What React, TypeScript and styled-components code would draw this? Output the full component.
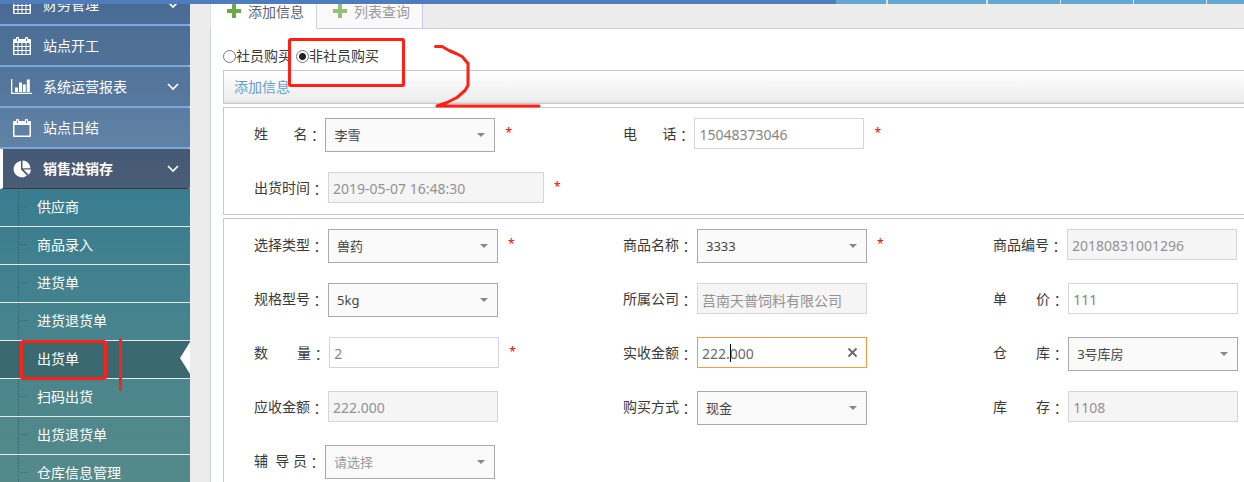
import React, { useId } from "react";
import styled, { createGlobalStyle, css } from "styled-components";

const GlobalStyle = createGlobalStyle`
  * { box-sizing: border-box; }
  body {
    margin: 0;
    background: #ececec;
    color: #393939;
    font: 14px/20px "Noto Sans", "Noto Sans CJK SC", sans-serif;
  }
  input, select, button { font-family: inherit; margin: 0; }
  a { text-decoration: none; color: inherit; }
`;

const Page = styled.div`
  position: relative;
  display: flex;
  flex-direction: column;
  height: 100vh;
  overflow: hidden;
`;

const TopBar = styled.header`
  display: flex;
  flex: none;
  justify-content: flex-end;
  height: 4px;
  background: #4f7dbb;
`;

const TopSlot = styled.div<{ $width: number; $gap: number }>`
  box-sizing: content-box;
  width: ${(p) => p.$width}px;
  background: #62a8d1;
  border-right: ${(p) => p.$gap}px solid #e1e1e1;
`;

const Body = styled.div`
  display: flex;
  flex: 1;
  min-height: 0;
  overflow: hidden;
`;

/* ---- sidebar ---- */

const Sidebar = styled.nav`
  flex: none;
  width: 190px;
  margin-top: -19px;
`;

const MenuLink = styled.a<{ $from: string; $to: string; $active?: boolean }>`
  display: grid;
  grid-template-columns: 20px 1fr 12px;
  align-items: center;
  column-gap: 11px;
  height: 41px;
  padding: 1px 11px 0 12px;
  color: #fff;
  background: linear-gradient(${(p) => p.$from}, ${(p) => p.$to}) padding-box;
  border-bottom: 2px solid #7ba7df;
  border-radius: 0 0 2px 0;
  ${(p) =>
    p.$active &&
    css`
      height: 40px;
      padding-left: 9px;
      font-weight: 700;
      border-left: 3px solid #fff;
      border-bottom: 1px solid #3b3b3b;
    `}
`;

const MenuIcon = styled.svg`
  display: block;
  overflow: visible;
`;

const SubMenu = styled.ul`
  margin: 0;
  padding: 0;
  list-style: none;
  background: linear-gradient(#3a7d90, #47848d 50%, #568a89);
`;

const SubItem = styled.li<{ $active?: boolean }>`
  position: relative;
  border-bottom: 1px solid #e4e9ea;
  background: ${(p) => (p.$active ? "#3a6a70" : "transparent")};

  &::before {
    content: "";
    position: absolute;
    top: 0;
    bottom: 0;
    left: 18px;
    border-left: 1px dotted #33626b;
  }
  &::after {
    content: "";
    position: absolute;
    top: 17px;
    left: 20px;
    width: 7px;
    border-top: 1px dotted #33626b;
  }
`;

const SubLink = styled.a`
  display: block;
  padding: 0 0 2px 37px;
  line-height: 35px;
  color: #fff;
`;

const ActiveArrow = styled.span`
  position: absolute;
  top: 1px;
  right: 0;
  border: solid transparent;
  border-width: 16px 10px 16px 0;
  border-right-color: #fff;
`;

/* ---- main area ---- */

const Main = styled.main`
  display: flex;
  flex: 1;
  flex-direction: column;
  min-width: 0;
  margin-left: 20px;
`;

const Tabs = styled.div`
  display: flex;
  flex: none;
  height: 25px;
  overflow: hidden;

  &::after {
    content: "";
    flex: 1;
    border-bottom: 1px solid #c5d0dc;
  }
`;

const Tab = styled.button<{ $active?: boolean }>`
  display: flex;
  align-items: center;
  gap: 7px;
  height: 35px;
  margin-top: -10px;
  padding: 2px 12px 0 16px;
  font-size: 14px;
  line-height: 20px;
  color: ${(p) => (p.$active ? "#576373" : "#999")};
  background: ${(p) => (p.$active ? "#fff" : "#f9f9f9")};
  border: 0 solid #c5d0dc;
  border-right-width: 1px;
  border-bottom: 1px solid ${(p) => (p.$active ? "#fff" : "#c5d0dc")};
  ${(p) => p.$active && "border-left: 1px solid #dde2e8;"}

  svg {
    margin-bottom: 3px;
    opacity: ${(p) => (p.$active ? 1 : 0.7)};
  }
`;

const Content = styled.div`
  flex: 1;
  padding-left: 12px;
  background: #fff;
  border-left: 1px solid #c5cfdf;
`;

const RadioRow = styled.div`
  display: flex;
  gap: 4px;
  padding: 17px 0 4px;
`;

const RadioLabel = styled.label`
  display: flex;
  align-items: center;
`;

const Radio = styled.input`
  appearance: none;
  width: 13px;
  height: 13px;
  border: 1px solid #777;
  border-radius: 50%;
  background: #fff;

  &:checked {
    background: radial-gradient(circle, #222 0 3px, #fff 4px);
  }
`;

const SectionTitle = styled.h2`
  margin: 0 0 3px;
  height: 34px;
  padding-left: 10px;
  font-size: 14px;
  font-weight: 400;
  line-height: 32px;
  color: #669fc7;
  background: linear-gradient(#fff, #ebebeb);
  border: 1px solid #c9c9c9;
  border-right: 0;
  box-shadow: inset 0 -1px #dcdcdc;
`;

const Panel = styled.section`
  display: grid;
  grid-template-columns: 369px 370px 1fr;
  grid-auto-rows: 34px;
  row-gap: 20px;
  margin-bottom: 3px;
  padding: 10px 0 8px 30px;
  border: 1px solid #c9c9c9;
  border-right: 0;
`;

const Field = styled.div<{ $column?: number }>`
  display: flex;
  align-items: flex-start;
  ${(p) => p.$column && `grid-column: ${p.$column};`}
`;

const FieldLabel = styled.label`
  margin-right: 4px;
  line-height: 32px;
  white-space: nowrap;
`;

const Colon = styled.span`
  font-family: "Noto Sans CJK TC", sans-serif;
  line-height: 14px;
  vertical-align: -2px;
`;

const ControlBox = styled.div<{ $wide?: boolean }>`
  position: relative;
  flex: none;
  width: ${(p) => (p.$wide ? 216 : 170)}px;
`;

const TextInput = styled.input<{ $focused?: boolean }>`
  display: block;
  width: 100%;
  height: 31px;
  padding: 2px 4px 0;
  font-size: 14px;
  color: ${(p) => (p.$focused ? "#696969" : "#858585")};
  background: #fff;
  border: 1px solid ${(p) => (p.$focused ? "#f59942" : "#d5d5d5")};
  border-radius: 0;
  outline: none;

  &:read-only {
    color: #939192;
    background: #f5f5f5;
  }
`;

const Caret = styled.span`
  position: absolute;
  top: 7px;
  left: 33px;
  width: 1px;
  height: 18px;
  background: #000;
`;

const ClearButton = styled.button`
  position: absolute;
  top: 10px;
  right: 9px;
  width: 11px;
  height: 11px;
  padding: 0;
  border: 0;
  background: none;

  svg { display: block; }
`;

const Select = styled.select<{ $empty?: boolean }>`
  appearance: none;
  display: block;
  width: 100%;
  height: 34px;
  padding: 0 24px 0 8px;
  font-size: 13px;
  color: ${(p) => (p.$empty ? "#999" : "#444")};
  background: #fafafa;
  border: 1px solid #aaa;
  border-radius: 0;
`;

const SelectArrow = styled.span`
  position: absolute;
  top: 15px;
  right: 10px;
  border: solid transparent;
  border-width: 4px 4px 0;
  border-top-color: #888;
  pointer-events: none;
`;

const Required = styled.span`
  margin-left: 10px;
  font-size: 12px;
  line-height: 30px;
  color: #f00;
`;

const Marks = styled.svg`
  position: absolute;
  top: 0;
  left: 0;
  pointer-events: none;
`;

/* ---- icons ---- */

const CalendarGrid = () => (
  <MenuIcon width="20" height="20" viewBox="0 0 20 20">
    <path
      fill="#fff"
      fillRule="evenodd"
      d="M2 3h2V2q0-1 1-1h1q1 0 1 1v1h6V2q0-1 1-1h1q1 0 1 1v1h2q1 0 1 1v14q0 1-1 1H2q-1 0-1-1V4q0-1 1-1zM2.500 7v3h3V7zM6.500 7v3h3V7zM10.500 7v3h3V7zM14.500 7v3h3V7zM2.500 11v3h3v-3zM6.500 11v3h3v-3zM10.500 11v3h3v-3zM14.500 11v3h3v-3zM2.500 15v3h3v-3zM6.500 15v3h3v-3zM10.500 15v3h3v-3zM14.500 15v3h3v-3z"
    />
    <path stroke="#4f7096" d="M5.500 2.500v2.500M14.500 2.500v2.500" />
  </MenuIcon>
);

const CalendarBlank = () => (
  <MenuIcon width="20" height="20" viewBox="0 0 20 20">
    <path
      fill="#fff"
      fillRule="evenodd"
      d="M2 3h2V2q0-1 1-1h1q1 0 1 1v1h6V2q0-1 1-1h1q1 0 1 1v1h2q1 0 1 1v14q0 1-1 1H2q-1 0-1-1V4q0-1 1-1zM2.500 7v10.500h15V7z"
    />
    <path stroke="#5e80a4" d="M5.500 2.500v2.500M14.500 2.500v2.500" />
  </MenuIcon>
);

const BarChart = () => (
  <MenuIcon width="20" height="20" viewBox="0 0 20 20">
    <path
      fill="#fff"
      d="M-1 2h1.300v13.700H20V17H-1zM3 10.500h3V15H3zM7 5.500h3V15H7zM10.800 7.500h3V15h-3zM14.800 2.500h3V15h-3z"
    />
  </MenuIcon>
);

const PieChart = () => (
  <MenuIcon width="20" height="20" viewBox="0 0 20 20">
    <path
      fill="#fff"
      d="M9 2v8.500l6 6A8.200 8.200 0 1 1 9 2zM10.500 1.500a8 8 0 0 1 8 7.800h-8zM11.500 10.500H19a8 8 0 0 1-2.200 5.300z"
    />
  </MenuIcon>
);

const Chevron = () => (
  <MenuIcon width="12" height="8" viewBox="0 0 12 8">
    <path d="M1 1l5 5 5-5" fill="none" stroke="#fff" strokeWidth="1.700" />
  </MenuIcon>
);

const Plus = () => (
  <svg width="14" height="14" viewBox="0 0 14 14">
    <path
      fill="#69aa46"
      d="M5.500 0h3q.5 0 .5.500V5h4.500q.5 0 .5.500v3q0 .5-.5.500H9v4.500q0 .5-.5.500h-3q-.5 0-.5-.5V9H.5Q0 9 0 8.500v-3Q0 5 .5 5H5V.5q0-.5.5-.5z"
    />
  </svg>
);

/* ---- form parts ---- */

type FieldProps = {
  label: string;
  value: string;
  required?: boolean;
  column?: number;
};

const LabelText = ({ id, text }: { id: string; text: string }) => (
  <FieldLabel htmlFor={id}>
    {text}
    <Colon>：</Colon>
  </FieldLabel>
);

const TextField = ({
  label,
  value,
  required,
  column,
  readOnly,
  wide,
  focused,
}: FieldProps & { readOnly?: boolean; wide?: boolean; focused?: boolean }) => {
  const id = useId();
  return (
    <Field $column={column}>
      <LabelText id={id} text={label} />
      <ControlBox $wide={wide}>
        <TextInput
          id={id}
          type="text"
          defaultValue={value}
          readOnly={readOnly}
          $focused={focused}
        />
        {focused && (
          <>
            <Caret />
            <ClearButton type="button" aria-label="清除">
              <svg width="11" height="11" viewBox="0 0 11 11">
                <path
                  d="M1.500 1.500l8 8M9.500 1.500l-8 8"
                  stroke="#666"
                  strokeWidth="1.800"
                />
              </svg>
            </ClearButton>
          </>
        )}
      </ControlBox>
      {required && <Required>*</Required>}
    </Field>
  );
};

const SelectField = ({
  label,
  value,
  required,
  column,
  empty,
}: FieldProps & { empty?: boolean }) => {
  const id = useId();
  return (
    <Field $column={column}>
      <LabelText id={id} text={label} />
      <ControlBox>
        <Select id={id} $empty={empty}>
          <option>{value}</option>
        </Select>
        <SelectArrow />
      </ControlBox>
      {required && <Required>*</Required>}
    </Field>
  );
};

/* Two-character labels are spread out with non-breaking spaces. */
const spread = (first: string, last: string, count: number) =>
  first + "\u00a0".repeat(count) + last;

const topSlots = [
  [50, 2],
  [98, 2],
  [72, 1],
  [72, 1],
  [72, 1],
  [37, 0],
];

const subItems = [
  "供应商",
  "商品录入",
  "进货单",
  "进货退货单",
  "出货单",
  "扫码出货",
  "出货退货单",
  "仓库信息管理",
];

export default function App() {
  return (
    <>
      <GlobalStyle />
      <Page>
        <TopBar>
          {topSlots.map(([width, gap], i) => (
            <TopSlot key={i} $width={width} $gap={gap} />
          ))}
        </TopBar>
        <Body>
          <Sidebar>
            <MenuLink href="#" $from="#48688f" $to="#4c6d96">
              <CalendarGrid />
              财务管理
              <Chevron />
            </MenuLink>
            <MenuLink href="#" $from="#4d6e95" $to="#517298">
              <CalendarGrid />
              站点开工
            </MenuLink>
            <MenuLink href="#" $from="#53749b" $to="#58799e">
              <BarChart />
              系统运营报表
              <Chevron />
            </MenuLink>
            <MenuLink href="#" $from="#5b7da2" $to="#6082a5">
              <CalendarBlank />
              站点日结
            </MenuLink>
            <MenuLink href="#" $from="#465974" $to="#495d77" $active>
              <PieChart />
              销售进销存
              <Chevron />
            </MenuLink>
            <SubMenu>
              {subItems.map((name) => (
                <SubItem key={name} $active={name === "出货单"}>
                  <SubLink href="#">{name}</SubLink>
                  {name === "出货单" && <ActiveArrow />}
                </SubItem>
              ))}
            </SubMenu>
          </Sidebar>
          <Main>
            <Tabs>
              <Tab type="button" $active>
                <Plus />
                添加信息
              </Tab>
              <Tab type="button">
                <Plus />
                列表查询
              </Tab>
            </Tabs>
            <Content>
              <RadioRow>
                <RadioLabel>
                  <Radio type="radio" name="buyer" />
                  社员购买
                </RadioLabel>
                <RadioLabel>
                  <Radio type="radio" name="buyer" defaultChecked />
                  非社员购买
                </RadioLabel>
              </RadioRow>
              <SectionTitle>添加信息</SectionTitle>
              <Panel>
                <SelectField label={spread("姓", "名", 7)} value="李雪" required />
                <TextField label={spread("电", "话", 7)} value="15048373046" required />
                <TextField
                  label="出货时间"
                  value="2019-05-07 16:48:30"
                  column={1}
                  readOnly
                  wide
                  required
                />
              </Panel>
              <Panel>
                <SelectField label="选择类型" value="兽药" required />
                <SelectField label="商品名称" value="3333" required />
                <TextField label="商品编号" value="20180831001296" readOnly />
                <SelectField label="规格型号" value="5kg" />
                <TextField label="所属公司" value="莒南天普饲料有限公司" readOnly />
                <TextField label={spread("单", "价", 8)} value="111" />
                <TextField label={spread("数", "量", 8)} value="2" required />
                <TextField label="实收金额" value="222.000" focused />
                <SelectField label={spread("仓", "库", 8)} value="3号库房" />
                <TextField label="应收金额" value="222.000" readOnly />
                <SelectField label="购买方式" value="现金" />
                <TextField label={spread("库", "存", 8)} value="1108" readOnly />
                <SelectField
                  label={spread("辅", spread("导", "员", 1), 2)}
                  value="请选择"
                  empty
                />
              </Panel>
            </Content>
          </Main>
        </Body>
        <Marks
          width="560"
          height="400"
          viewBox="0 0 560 400"
          fill="none"
          stroke="#ff2116"
          strokeWidth="3"
          strokeLinecap="round"
          strokeLinejoin="round"
        >
          <rect x="289.500" y="39.500" width="114" height="46" rx="1" />
          <rect x="21.500" y="341.500" width="84" height="37" rx="2" />
          <path d="M120.500 339.500v50" />
          <path d="M435.500 46.500h6.500l7 4 7 3 6 3 6 7v22l-3 5-8 7-10 5-10 3.500h102" />
        </Marks>
      </Page>
    </>
  );
}
